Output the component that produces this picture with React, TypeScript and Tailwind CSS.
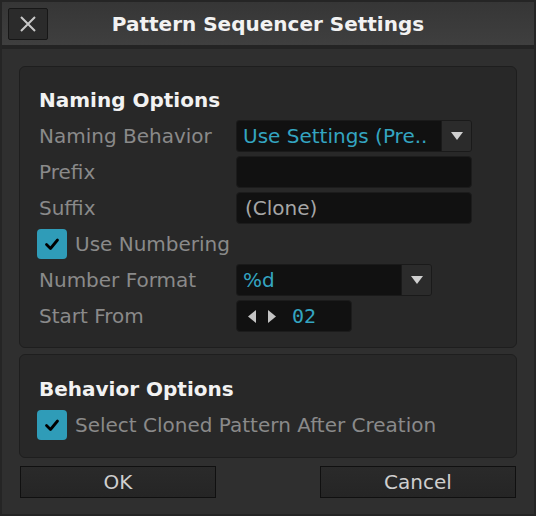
import { type FC, type ReactNode } from 'react';

const FONT = "font-['DejaVu_Sans',_'Liberation_Sans',_sans-serif]";

const CheckIcon = () => (
    <svg width="18" height="18" viewBox="0 0 18 18">
        <path d="M3.5 9.5 L7.5 13.5 L14.5 5" fill="none" stroke="#000" strokeWidth="2.8" strokeLinecap="round" strokeLinejoin="round" />
    </svg>
);

const Caret: FC<{ dir: 'down' | 'left' | 'right' }> = ({ dir }) => {
    if (dir === 'down') {
        return (
            <svg width="14" height="10" viewBox="0 0 14 10">
                <path d="M1 1 H13 L7 9 Z" fill="#d0d0d0" />
            </svg>
        );
    }
    return (
        <svg width="10" height="15" viewBox="0 0 10 15">
            <path d={dir === 'left' ? 'M9 1 V14 L1 7.5 Z' : 'M1 1 V14 L9 7.5 Z'} fill="#c4c4c4" />
        </svg>
    );
};

const Checkbox: FC<{ label: string }> = ({ label }) => (
    <div className="flex items-center gap-[8px] h-[32px] -ml-[2px]">
        <div className="w-[30px] h-[30px] rounded-[4px] bg-[#2f9cb8] flex items-center justify-center">
            <CheckIcon />
        </div>
        <span className="text-[#8a8a8a]">{label}</span>
    </div>
);

const Row: FC<{ label: string; children: ReactNode }> = ({ label, children }) => (
    <div className="grid grid-cols-[197px_1fr] items-center h-[32px]">
        <span className="text-[#8a8a8a] whitespace-nowrap">{label}</span>
        <div className="flex">{children}</div>
    </div>
);

const Dropdown: FC<{ value: string; width: string }> = ({ value, width }) => (
    <div className={`${width} h-[32px] flex border border-[#1a1a1a] rounded-[3px] overflow-hidden`}>
        <div className="flex-1 bg-[#111111] flex items-center pl-[6px] text-[#34a5c1] whitespace-nowrap overflow-hidden">
            {value}
        </div>
        <div className="w-[30px] bg-[#2b2b2b] border-l border-[#1a1a1a] flex items-center justify-center">
            <Caret dir="down" />
        </div>
    </div>
);

const TextField: FC<{ value?: string }> = ({ value }) => (
    <div className="w-[236px] h-[32px] bg-[#111111] border border-[#1c1c1c] rounded-[4px] flex items-center pl-[8px] text-[#a6a6a6]">
        {value}
    </div>
);

const Panel: FC<{ title: string; className: string; children: ReactNode }> = ({ title, className, children }) => (
    <div className={`bg-[#282828] border border-[#1e1e1e] rounded-[6px] pl-[19px] pr-[20px] ${className}`}>
        <div className="h-[24px] leading-[24px] font-bold text-[#f2f2f2] mb-[8px]">{title}</div>
        {children}
    </div>
);

export default function App() {
    return (
        <div className={`${FONT} text-[20px] w-[536px] h-[516px] bg-[#252525] p-[2px] flex flex-col`}>
            {/* Title bar */}
            <div className="h-[43px] grid grid-cols-[48px_1fr_48px] items-center bg-gradient-to-b from-[#363636] to-[#3f3f3f]">
                <button
                    type="button"
                    className="ml-[6px] w-[40px] h-[32px] bg-[#2b2b2b] border border-[#171717] rounded-[2px] flex items-center justify-center"
                >
                    <svg width="18" height="18" viewBox="0 0 18 18">
                        <path d="M2 2 L16 16 M16 2 L2 16" stroke="#c8c8c8" strokeWidth="2" />
                    </svg>
                </button>
                <div className="text-center font-bold text-[#f2f2f2] whitespace-nowrap">Pattern Sequencer Settings</div>
                <div />
            </div>
            <div className="h-[4px] bg-[#242424]" />

            {/* Body */}
            <div className="flex-1 bg-[#2f2f2f] pt-[17px] px-[17px] flex flex-col">
                <Panel title="Naming Options" className="pt-[21px] pb-[15px]">
                    <div className="flex flex-col gap-[4px]">
                        <Row label="Naming Behavior">
                            <Dropdown value="Use Settings (Pre.." width="w-[236px]" />
                        </Row>
                        <Row label="Prefix">
                            <TextField />
                        </Row>
                        <Row label="Suffix">
                            <TextField value="(Clone)" />
                        </Row>
                        <Checkbox label="Use Numbering" />
                        <Row label="Number Format">
                            <Dropdown value="%d" width="w-[196px]" />
                        </Row>
                        <Row label="Start From">
                            <div className="w-[116px] h-[32px] bg-[#111111] border border-[#1c1c1c] rounded-[4px] flex items-center pl-[10px] gap-[10px]">
                                <Caret dir="left" />
                                <Caret dir="right" />
                                <span className="ml-[5px] font-['DejaVu_Sans_Mono',_monospace] text-[#34a5c1]">02</span>
                            </div>
                        </Row>
                    </div>
                </Panel>

                <Panel title="Behavior Options" className="mt-[6px] pt-[22px] pb-[16px]">
                    <Checkbox label="Select Cloned Pattern After Creation" />
                </Panel>

                {/* Buttons */}
                <div className="mt-[8px] flex justify-between pl-[1px] pr-[1px]">
                    <button
                        type="button"
                        className="w-[196px] h-[32px] bg-gradient-to-b from-[#2a2a2a] to-[#252525] border border-[#101010] text-[#cfcfcf]"
                    >
                        OK
                    </button>
                    <button
                        type="button"
                        className="w-[196px] h-[32px] bg-gradient-to-b from-[#2a2a2a] to-[#252525] border border-[#101010] text-[#cfcfcf]"
                    >
                        Cancel
                    </button>
                </div>
            </div>
        </div>
    );
}
